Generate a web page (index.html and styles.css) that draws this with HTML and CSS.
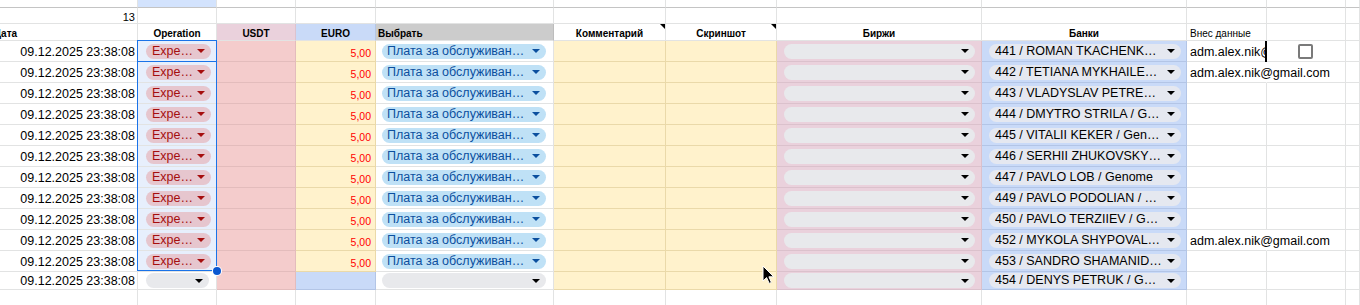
FILE: index.html
```html
<!DOCTYPE html>
<html lang="ru">
<head>
<meta charset="utf-8">
<title>Sheet</title>
<link rel="stylesheet" href="styles.css">
</head>
<body>
<div class="sheet">
  <div class="row r-top">
    <div class="cell"></div><div class="cell top-sel"></div><div class="cell"></div><div class="cell"></div><div class="cell"></div><div class="cell"></div><div class="cell"></div><div class="cell"></div><div class="cell"></div><div class="cell"></div><div class="cell"></div><div class="cell"></div>
  </div>
  <div class="row r-num">
    <div class="cell right num">13</div><div class="cell"></div><div class="cell"></div><div class="cell"></div><div class="cell"></div><div class="cell"></div><div class="cell"></div><div class="cell"></div><div class="cell"></div><div class="cell"></div><div class="cell"></div><div class="cell"></div>
  </div>
  <div class="row r-head">
    <div class="cell head left"><span class="cut">Дата</span></div>
    <div class="cell head center">Operation</div>
    <div class="cell head center h-usdt">USDT</div>
    <div class="cell head center h-euro">EURO</div>
    <div class="cell head left h-pick">Выбрать</div>
    <div class="cell head center note">Комментарий</div>
    <div class="cell head center note">Скриншот</div>
    <div class="cell head center">Биржи</div>
    <div class="cell head center">Банки</div>
    <div class="cell head-plain left">Внес данные</div>
    <div class="cell"></div>
    <div class="cell"></div>
  </div>

  <div class="row r-data">
    <div class="cell right date">09.12.2025 23:38:08</div>
    <div class="cell op"><span class="chip chip-op"><span class="txt">Expe…</span><i class="arr"></i></span></div>
    <div class="cell usdt"></div>
    <div class="cell euro right val">5,00</div>
    <div class="cell pick"><span class="chip chip-pick"><span class="txt">Плата за обслуживан…</span><i class="arr"></i></span></div>
    <div class="cell yel"></div><div class="cell yel"></div>
    <div class="cell exch"><span class="chip chip-gray"><span class="txt"></span><i class="arr"></i></span></div>
    <div class="cell bank"><span class="chip chip-bank"><span class="txt">441 / ROMAN TKACHENK…</span><i class="arr"></i></span></div>
    <div class="cell who"><span class="clip">adm.alex.nik@gmail.com</span></div>
    <div class="cell center"><span class="box"></span></div>
    <div class="cell"></div>
  </div>
  <div class="row r-data">
    <div class="cell right date">09.12.2025 23:38:08</div>
    <div class="cell op"><span class="chip chip-op"><span class="txt">Expe…</span><i class="arr"></i></span></div>
    <div class="cell usdt"></div>
    <div class="cell euro right val">5,00</div>
    <div class="cell pick"><span class="chip chip-pick"><span class="txt">Плата за обслуживан…</span><i class="arr"></i></span></div>
    <div class="cell yel"></div><div class="cell yel"></div>
    <div class="cell exch"><span class="chip chip-gray"><span class="txt"></span><i class="arr"></i></span></div>
    <div class="cell bank"><span class="chip chip-bank"><span class="txt">442 / TETIANA MYKHAILE…</span><i class="arr"></i></span></div>
    <div class="cell who over">adm.alex.nik@gmail.com</div>
    <div class="cell"></div>
    <div class="cell"></div>
  </div>
  <div class="row r-data">
    <div class="cell right date">09.12.2025 23:38:08</div>
    <div class="cell op"><span class="chip chip-op"><span class="txt">Expe…</span><i class="arr"></i></span></div>
    <div class="cell usdt"></div>
    <div class="cell euro right val">5,00</div>
    <div class="cell pick"><span class="chip chip-pick"><span class="txt">Плата за обслуживан…</span><i class="arr"></i></span></div>
    <div class="cell yel"></div><div class="cell yel"></div>
    <div class="cell exch"><span class="chip chip-gray"><span class="txt"></span><i class="arr"></i></span></div>
    <div class="cell bank"><span class="chip chip-bank"><span class="txt">443 / VLADYSLAV PETRE…</span><i class="arr"></i></span></div>
    <div class="cell who"></div>
    <div class="cell"></div>
    <div class="cell"></div>
  </div>
  <div class="row r-data">
    <div class="cell right date">09.12.2025 23:38:08</div>
    <div class="cell op"><span class="chip chip-op"><span class="txt">Expe…</span><i class="arr"></i></span></div>
    <div class="cell usdt"></div>
    <div class="cell euro right val">5,00</div>
    <div class="cell pick"><span class="chip chip-pick"><span class="txt">Плата за обслуживан…</span><i class="arr"></i></span></div>
    <div class="cell yel"></div><div class="cell yel"></div>
    <div class="cell exch"><span class="chip chip-gray"><span class="txt"></span><i class="arr"></i></span></div>
    <div class="cell bank"><span class="chip chip-bank"><span class="txt">444 / DMYTRO STRILA / G…</span><i class="arr"></i></span></div>
    <div class="cell who"></div>
    <div class="cell"></div>
    <div class="cell"></div>
  </div>
  <div class="row r-data">
    <div class="cell right date">09.12.2025 23:38:08</div>
    <div class="cell op"><span class="chip chip-op"><span class="txt">Expe…</span><i class="arr"></i></span></div>
    <div class="cell usdt"></div>
    <div class="cell euro right val">5,00</div>
    <div class="cell pick"><span class="chip chip-pick"><span class="txt">Плата за обслуживан…</span><i class="arr"></i></span></div>
    <div class="cell yel"></div><div class="cell yel"></div>
    <div class="cell exch"><span class="chip chip-gray"><span class="txt"></span><i class="arr"></i></span></div>
    <div class="cell bank"><span class="chip chip-bank"><span class="txt">445 / VITALII KEKER / Gen…</span><i class="arr"></i></span></div>
    <div class="cell who"></div>
    <div class="cell"></div>
    <div class="cell"></div>
  </div>
  <div class="row r-data">
    <div class="cell right date">09.12.2025 23:38:08</div>
    <div class="cell op"><span class="chip chip-op"><span class="txt">Expe…</span><i class="arr"></i></span></div>
    <div class="cell usdt"></div>
    <div class="cell euro right val">5,00</div>
    <div class="cell pick"><span class="chip chip-pick"><span class="txt">Плата за обслуживан…</span><i class="arr"></i></span></div>
    <div class="cell yel"></div><div class="cell yel"></div>
    <div class="cell exch"><span class="chip chip-gray"><span class="txt"></span><i class="arr"></i></span></div>
    <div class="cell bank"><span class="chip chip-bank"><span class="txt">446 / SERHII ZHUKOVSKY…</span><i class="arr"></i></span></div>
    <div class="cell who"></div>
    <div class="cell"></div>
    <div class="cell"></div>
  </div>
  <div class="row r-data">
    <div class="cell right date">09.12.2025 23:38:08</div>
    <div class="cell op"><span class="chip chip-op"><span class="txt">Expe…</span><i class="arr"></i></span></div>
    <div class="cell usdt"></div>
    <div class="cell euro right val">5,00</div>
    <div class="cell pick"><span class="chip chip-pick"><span class="txt">Плата за обслуживан…</span><i class="arr"></i></span></div>
    <div class="cell yel"></div><div class="cell yel"></div>
    <div class="cell exch"><span class="chip chip-gray"><span class="txt"></span><i class="arr"></i></span></div>
    <div class="cell bank"><span class="chip chip-bank"><span class="txt">447 / PAVLO LOB / Genome</span><i class="arr"></i></span></div>
    <div class="cell who"></div>
    <div class="cell"></div>
    <div class="cell"></div>
  </div>
  <div class="row r-data">
    <div class="cell right date">09.12.2025 23:38:08</div>
    <div class="cell op"><span class="chip chip-op"><span class="txt">Expe…</span><i class="arr"></i></span></div>
    <div class="cell usdt"></div>
    <div class="cell euro right val">5,00</div>
    <div class="cell pick"><span class="chip chip-pick"><span class="txt">Плата за обслуживан…</span><i class="arr"></i></span></div>
    <div class="cell yel"></div><div class="cell yel"></div>
    <div class="cell exch"><span class="chip chip-gray"><span class="txt"></span><i class="arr"></i></span></div>
    <div class="cell bank"><span class="chip chip-bank"><span class="txt">449 / PAVLO PODOLIAN / …</span><i class="arr"></i></span></div>
    <div class="cell who"></div>
    <div class="cell"></div>
    <div class="cell"></div>
  </div>
  <div class="row r-data">
    <div class="cell right date">09.12.2025 23:38:08</div>
    <div class="cell op"><span class="chip chip-op"><span class="txt">Expe…</span><i class="arr"></i></span></div>
    <div class="cell usdt"></div>
    <div class="cell euro right val">5,00</div>
    <div class="cell pick"><span class="chip chip-pick"><span class="txt">Плата за обслуживан…</span><i class="arr"></i></span></div>
    <div class="cell yel"></div><div class="cell yel"></div>
    <div class="cell exch"><span class="chip chip-gray"><span class="txt"></span><i class="arr"></i></span></div>
    <div class="cell bank"><span class="chip chip-bank"><span class="txt">450 / PAVLO TERZIIEV / G…</span><i class="arr"></i></span></div>
    <div class="cell who"></div>
    <div class="cell"></div>
    <div class="cell"></div>
  </div>
  <div class="row r-data">
    <div class="cell right date">09.12.2025 23:38:08</div>
    <div class="cell op"><span class="chip chip-op"><span class="txt">Expe…</span><i class="arr"></i></span></div>
    <div class="cell usdt"></div>
    <div class="cell euro right val">5,00</div>
    <div class="cell pick"><span class="chip chip-pick"><span class="txt">Плата за обслуживан…</span><i class="arr"></i></span></div>
    <div class="cell yel"></div><div class="cell yel"></div>
    <div class="cell exch"><span class="chip chip-gray"><span class="txt"></span><i class="arr"></i></span></div>
    <div class="cell bank"><span class="chip chip-bank"><span class="txt">452 / MYKOLA SHYPOVAL…</span><i class="arr"></i></span></div>
    <div class="cell who over">adm.alex.nik@gmail.com</div>
    <div class="cell"></div>
    <div class="cell"></div>
  </div>
  <div class="row r-data">
    <div class="cell right date">09.12.2025 23:38:08</div>
    <div class="cell op"><span class="chip chip-op"><span class="txt">Expe…</span><i class="arr"></i></span></div>
    <div class="cell usdt"></div>
    <div class="cell euro right val">5,00</div>
    <div class="cell pick"><span class="chip chip-pick"><span class="txt">Плата за обслуживан…</span><i class="arr"></i></span></div>
    <div class="cell yel"></div><div class="cell yel"></div>
    <div class="cell exch"><span class="chip chip-gray"><span class="txt"></span><i class="arr"></i></span></div>
    <div class="cell bank"><span class="chip chip-bank"><span class="txt">453 / SANDRO SHAMANID…</span><i class="arr"></i></span></div>
    <div class="cell who"></div>
    <div class="cell"></div>
    <div class="cell"></div>
  </div>
  <div class="row r-last">
    <div class="cell right date">09.12.2025 23:38:08</div>
    <div class="cell"><span class="chip chip-gray"><span class="txt"></span><i class="arr"></i></span></div>
    <div class="cell usdt"></div>
    <div class="cell euro-blue"></div>
    <div class="cell pick"><span class="chip chip-gray"><span class="txt"></span><i class="arr"></i></span></div>
    <div class="cell yel"></div><div class="cell yel"></div>
    <div class="cell exch"><span class="chip chip-gray"><span class="txt"></span><i class="arr"></i></span></div>
    <div class="cell bank"><span class="chip chip-bank"><span class="txt">454 / DENYS PETRUK / G…</span><i class="arr"></i></span></div>
    <div class="cell who"></div>
    <div class="cell"></div>
    <div class="cell"></div>
  </div>
  <div class="row r-empty">
    <div class="cell"></div><div class="cell"></div><div class="cell"></div><div class="cell"></div><div class="cell"></div><div class="cell"></div><div class="cell"></div><div class="cell"></div><div class="cell"></div><div class="cell"></div><div class="cell"></div><div class="cell"></div>
  </div>

  <div class="selection"></div>
  <div class="active-line"></div>
  <div class="handle"></div>
  <div class="caret"></div>
  <svg class="pointer" width="14" height="20" viewBox="0 0 14 20"><path d="M1 1 L1 16 L4.6 12.6 L7.2 18.4 L9.4 17.4 L6.9 11.8 L11.8 11.8 Z" fill="#000" stroke="#fff" stroke-width="1"/></svg>
</div>
</body>
</html>
```

FILE: styles.css
```css
body {
  margin: 0;
  background: #fff;
  font-family: "Liberation Sans", Arial, sans-serif;
  overflow: hidden;
}
.sheet {
  position: relative;
  width: 1360px;
  height: 305px;
  overflow: hidden;
}
.row {
  display: grid;
  grid-template-columns: 138px 79px 79px 80px 178px 112px 111px 205px 205px 80px 79px 14px;
}
.cell {
  box-sizing: border-box;
  border-right: 1px solid #e2e3e3;
  border-bottom: 1px solid #e2e3e3;
  overflow: hidden;
  white-space: nowrap;
  display: flex;
  align-items: center;
  position: relative;
  color: #000;
}
.r-top { height: 8px; }
.r-top .cell { border-bottom-color: #c4c4c4; }
.top-sel { background: #d3e3fd; }
.r-num { height: 16px; }
.r-head { height: 17px; }
.r-data { height: 21px; }
.r-last { height: 18px; }
.r-empty { height: 20px; }

.right { justify-content: flex-end; }
.center { justify-content: center; }
.left { justify-content: flex-start; }

.num { font-size: 11px; padding-right: 2px; padding-top: 2px; }
.head { font-size: 10px; font-weight: bold; padding-top: 2px; }
.head.left { padding-left: 2px; }
.head-plain { font-size: 10px; padding-left: 3px; padding-top: 2px; }
.cut { margin-left: -8px; }
.h-usdt { background: #ead1dc; border-right-color: #dcc3ce; }
.h-euro { background: #c9daf8; border-right-color: #b5c6e4; }
.h-pick { background: #cccccc; border-right-color: #bdbdbd; }
.note::after {
  content: "";
  position: absolute;
  top: 0;
  right: 0;
  border-top: 5px solid #000;
  border-left: 5px solid transparent;
}

.date { font-size: 12.5px; padding-right: 2px; padding-top: 1px; }
.op { background: #e7effc; }
.usdt { background: #f4cccc; border-color: #e3bcbc; }
.euro { background: #fff2cc; border-color: #ead9a9; }
.euro-blue { background: #c9daf8; border-color: #b3c5e6; }
.val { color: #ff0000; font-size: 10.5px; padding-right: 4px; padding-top: 3px; }
.yel { background: #fff2cc; border-color: #ead9a9; }
.exch { background: #ead1dc; border-color: #dbc1cc; }
.bank { background: #c9daf8; border-color: #b3c5e6; }
.who { font-size: 12.5px; padding-left: 3px; padding-top: 1px; }
.who.over { overflow: visible; border-right-color: transparent; z-index: 1; }
.clip { overflow: hidden; width: 76px; }

.chip {
  box-sizing: border-box;
  display: flex;
  align-items: center;
  height: 15px;
  border-radius: 8px;
  padding: 0 6px 0 6px;
  font-size: 12.5px;
  flex: 1;
}
.chip .txt { flex: 1; overflow: hidden; white-space: nowrap; line-height: 15px; }
.arr {
  width: 0;
  height: 0;
  border-left: 4px solid transparent;
  border-right: 4px solid transparent;
  border-top: 4px solid #000;
  margin-left: 4px;
}
.op .chip, .r-last .cell:nth-child(2) .chip { margin: 0 7px 0 8px; }
.chip-op { background: #e6c6ce; color: #a50e0e; }
.chip-op .arr { border-top-color: #a50e0e; }
.chip-pick { background: #bfe1f6; color: #0b4f9e; margin: 0 7px 0 6px; padding-left: 5px; }
.chip-pick .arr { border-top-color: #0b4f9e; }
.pick .chip-gray { margin: 0 7px 0 6px; }
.chip-gray { background: #e8e9ec; }
.exch .chip { margin: 0 6px 0 7px; }
.chip-bank { background: #e5e8f0; margin: 0 5px 0 7px; }

.box {
  box-sizing: border-box;
  width: 15px;
  height: 15px;
  border: 2px solid #7a7a7a;
  border-radius: 2px;
  margin-right: 2px;
}

.selection {
  position: absolute;
  left: 137px;
  top: 40px;
  width: 80px;
  height: 231px;
  box-sizing: border-box;
  border: 1px solid #1a73e8;
  pointer-events: none;
}
.active-line {
  position: absolute;
  left: 137px;
  top: 61px;
  width: 80px;
  height: 1px;
  background: #1a73e8;
}
.handle {
  position: absolute;
  left: 213px;
  top: 267px;
  width: 8px;
  height: 8px;
  border-radius: 50%;
  background: #0b57d0;
  box-shadow: 0 0 0 1px #fff;
}
.caret {
  position: absolute;
  left: 1265px;
  top: 41px;
  width: 2px;
  height: 21px;
  background: #000;
  z-index: 2;
}
.pointer {
  position: absolute;
  left: 762px;
  top: 265px;
  z-index: 3;
}
```
